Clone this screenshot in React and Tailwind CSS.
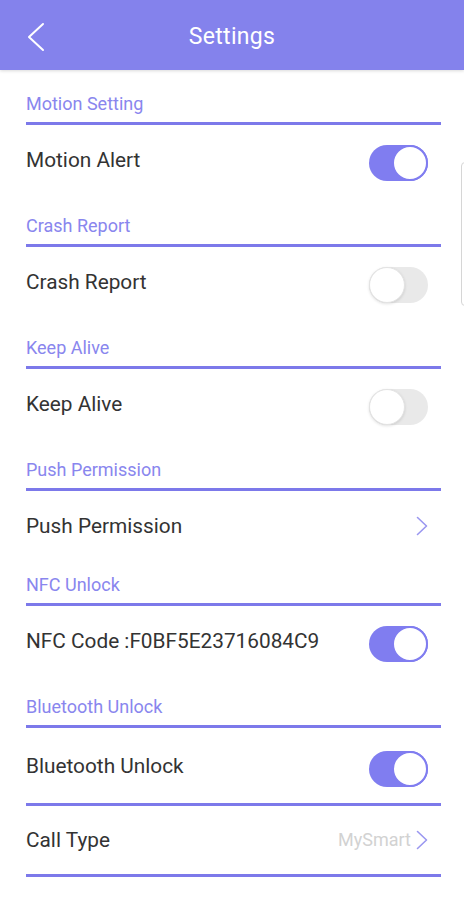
import React from "react";

const font = { fontFamily: "Roboto, 'Noto Sans', Arial, sans-serif" };

function Toggle({ on }) {
  if (on) {
    return (
      <div className="relative w-[59px] h-[36px] mt-[6px] rounded-full bg-[#807df0] shrink-0">
        <div className="absolute right-0 top-0 w-[36px] h-[36px] rounded-full bg-white border-[2px] border-[#807df0]" />
      </div>
    );
  }
  return (
    <div className="relative w-[59px] h-[36px] mt-[6px] rounded-full bg-[#e9e9e9] shrink-0">
      <div className="absolute left-0 top-0 w-[36px] h-[36px] rounded-full bg-white border border-[#e3e3e3] shadow-[0_1px_3px_rgba(0,0,0,0.12)]" />
    </div>
  );
}

function Chevron({ color = "#9a97f0" }) {
  return (
    <svg width="12" height="20" viewBox="0 0 12 20" className="shrink-0">
      <polyline points="1.5,1.5 10.5,10 1.5,18.5" fill="none" stroke={color} strokeWidth="1.6" strokeLinecap="round" strokeLinejoin="round" />
    </svg>
  );
}

function Line() {
  return <div className="ml-[26px] mr-[23px] h-[3px] bg-[#7c79ea]" />;
}

function SectionHeader({ title, h = "h-[49px]" }) {
  return (
    <div className={`${h} flex items-end px-[26px] pb-[8px]`}>
      <span className="text-[18px] leading-[20px] text-[#8986ee]">{title}</span>
    </div>
  );
}

function Row({ label, right, h = "h-[70px]", extra = "" }) {
  return (
    <div className={`${h} ${extra} flex items-center justify-between pl-[26px] pr-[36px]`}>
      <span className="text-[20.8px] leading-[24px] text-[#333333]">{label}</span>
      {right}
    </div>
  );
}

export default function App() {
  return (
    <div style={font} className="relative w-[464px] h-[900px] bg-white overflow-hidden">
      <div className="relative h-[70px] bg-[#8482ec] flex items-center justify-center pt-[4px] shadow-[0_1px_3px_rgba(0,0,0,0.15)] z-10">
        <svg width="20" height="30" viewBox="0 0 20 30" className="absolute left-[26px] top-[22px]">
          <polyline points="17,2 3,15 17,28" fill="none" stroke="#ffffff" strokeWidth="2" strokeLinecap="round" strokeLinejoin="round" />
        </svg>
        <span className="text-white text-[23px] leading-[28px] tracking-[0.3px]">Settings</span>
      </div>

      <SectionHeader title="Motion Setting" h="h-[52px]" />
      <Line />
      <Row label="Motion Alert" right={<Toggle on />} />

      <SectionHeader title="Crash Report" />
      <Line />
      <Row label="Crash Report" right={<Toggle on={false} />} />

      <SectionHeader title="Keep Alive" />
      <Line />
      <Row label="Keep Alive" right={<Toggle on={false} />} />

      <SectionHeader title="Push Permission" />
      <Line />
      <Row label="Push Permission" h="h-[63px]" extra="pt-[6px]" right={<Chevron />} />

      <SectionHeader title="NFC Unlock" />
      <Line />
      <Row label="NFC Code :F0BF5E23716084C9" right={<Toggle on />} />

      <SectionHeader title="Bluetooth Unlock" />
      <Line />
      <Row label="Bluetooth Unlock" h="h-[75px]" right={<Toggle on />} />
      <Line />
      <Row
        label="Call Type"
        h="h-[68px]"
        right={
          <div className="flex items-center gap-[5px]">
            <span className="text-[18px] leading-[22px] text-[#d2d2d2]">MySmart</span>
            <Chevron />
          </div>
        }
      />
      <Line />

      <div className="absolute left-[461px] top-[162px] w-[8px] h-[144px] rounded-[4px] border border-[#d6d6d6]" />
    </div>
  );
}
